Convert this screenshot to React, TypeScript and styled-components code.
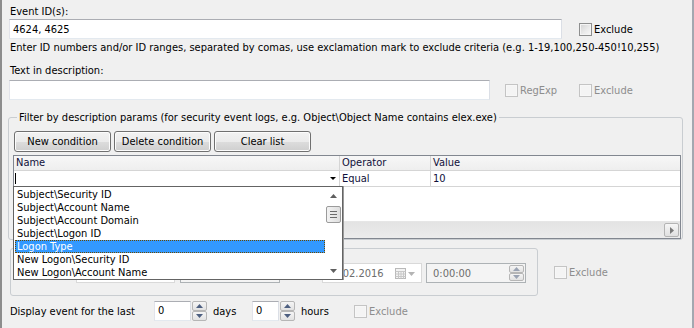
import React from "react";
import styled, {createGlobalStyle} from "styled-components";

const GlobalStyle = createGlobalStyle`
  html, body {
    margin: 0;
    padding: 0;
    background: #f0f0f0;
  }
  body {
    font-family: "DejaVu Sans Condensed", "DejaVu Sans", "Liberation Sans", sans-serif;
    font-stretch: condensed;
    font-size: 11px;
    line-height: 13px;
    color: #000;
  }
`

const Window = styled.div`
  position: relative;
  box-sizing: border-box;
  width: 694px;
  height: 328px;
  overflow: hidden;
  padding: 5px 0 0 7px;
  background: #f0f0f0;
  border-left: 2px solid #8d8d8d;
  border-right: 2px solid #a3a8b0;`
const Caption = styled.div<{ $top?: number; $w?: number }>`
  height: 13px;
  padding-left: 1px;
  margin-top: ${p => p.$top || 0}px;
  width: ${p => p.$w ? p.$w + "px" : "auto"};
  white-space: nowrap;`
const Row = styled.div<{ $top?: number }>`
  display: flex;
  align-items: center;
  margin-top: ${p => p.$top || 0}px;`
const TextBox = styled.div<{ $w: number }>`
  box-sizing: border-box;
  width: ${p => p.$w}px;
  height: 20px;
  padding: 3px 0 0 3px;
  background: #fff;
  border: 1px solid;
  border-color: #abadb3 #dbdfe6 #e3e9ef #e2e3ea;
  white-space: nowrap;`
const CheckItem = styled.label<{ $left?: number; $w?: number; $off?: boolean }>`
  display: flex;
  align-items: center;
  gap: 2px;
  margin-left: ${p => p.$left || 0}px;
  width: ${p => p.$w ? p.$w + "px" : "auto"};
  color: ${p => p.$off ? "#8d8d8d" : "#000"};
  white-space: nowrap;`
const Box = styled.span<{ $off?: boolean }>`
  box-sizing: border-box;
  width: 13px;
  height: 13px;
  border: 1px solid ${p => p.$off ? "#c4c4c4" : "#8e8f8f"};
  background: ${p => p.$off
    ? "#f4f4f4"
    : "linear-gradient(135deg, #d2d2d2 0%, #ececec 60%, #f8f8f8 100%)"};
  box-shadow: inset 0 0 0 1px ${p => p.$off ? "#f7f7f7" : "#f4f4f4"};`
const Help = styled.div`
  margin-top: 2px;
  padding-left: 1px;
  white-space: nowrap;`
const Group = styled.fieldset`
  box-sizing: border-box;
  width: 675px;
  min-width: 0;
  margin: 11px 0 0 -1px;
  padding: 7px 1px 0 4px;
  border: 1px solid #c9cdd1;
  border-radius: 3px;`
const Legend = styled.legend`
  margin-left: 4px;
  padding: 0 2px;
  white-space: nowrap;`
const ButtonRow = styled.div`
  display: flex;
  gap: 3px;
  margin-left: 1px;`
const Button = styled.button`
  box-sizing: border-box;
  width: 97px;
  height: 21px;
  padding: 0;
  font: inherit;
  color: #000;
  border: 1px solid #707070;
  border-radius: 3px;
  background: linear-gradient(#f2f2f2 0%, #ebebeb 50%, #dddddd 51%, #cfcfcf 100%);
  box-shadow: inset 0 0 0 1px #fcfcfc;`
const Grid = styled.div`
  box-sizing: border-box;
  display: flex;
  flex-direction: column;
  width: 668px;
  height: 84px;
  margin-top: 3px;
  border: 1px solid #828790;
  background: #fff;`
const GridRow = styled.div<{ $head?: boolean }>`
  display: grid;
  grid-template-columns: 326px 91px 1fr;
  height: ${p => p.$head ? 14 : 15}px;
  line-height: ${p => p.$head ? 14 : 15}px;
  border-bottom: 1px solid #d5d5d5;
  background: ${p => p.$head ? "linear-gradient(#f7f7f7, #eeeeee)" : "#fff"};
  color: #10103a;`
const Cell = styled.div`
  position: relative;
  padding-left: 2px;
  border-right: 1px solid #d5d5d5;
  white-space: nowrap;
  &:last-child { border-right: 0; }`
const Caret = styled.span`
  position: absolute;
  left: 1px;
  top: 2px;
  width: 1px;
  height: 11px;
  background: #000;`
const ComboArrow = styled.span`
  position: absolute;
  right: 3px;
  top: 6px;
  width: 0;
  height: 0;
  border-left: 3px solid transparent;
  border-right: 3px solid transparent;
  border-top: 3px solid #000;`
const Blank = styled.div`
  flex: 1;`
const HScroll = styled.div`
  display: flex;
  justify-content: flex-end;
  align-items: center;
  height: 17px;
  padding-right: 1px;
  background: linear-gradient(#e3e3e3, #ececec);
  border-top: 1px solid #e6e6e6;
  box-sizing: border-box;`
const ScrollBtn = styled.div`
  display: flex;
  align-items: center;
  justify-content: center;
  box-sizing: border-box;
  width: 15px;
  height: 14px;
  border: 1px solid #b4b4b4;
  border-radius: 2px;
  background: linear-gradient(#f6f6f6, #e0e0e0);`
const DropList = styled.div`
  position: absolute;
  z-index: 10;
  left: -1px;
  top: 15px;
  box-sizing: border-box;
  display: flex;
  width: 330px;
  height: 94px;
  padding-top: 1px;
  background: #fff;
  border: 1px solid #646464;
  box-shadow: 1px 0 0 #9a9a9a;
  color: #000;
  line-height: 13px;`
const Items = styled.div`
  flex: 1;
  padding-left: 1px;`
const Item = styled.div<{ $sel?: boolean }>`
  height: 13px;
  padding-left: 2px;
  background: ${p => p.$sel ? "#3399ff" : "transparent"};
  color: ${p => p.$sel ? "#fff" : "#000"};
  outline: ${p => p.$sel ? "1px dotted #6b4a00" : "none"};
  outline-offset: -1px;
  white-space: nowrap;`
const VScroll = styled.div`
  display: flex;
  flex-direction: column;
  width: 17px;
  margin-top: -1px;`
const Arrow = styled.div`
  display: flex;
  align-items: center;
  justify-content: center;
  height: 17px;`
const Thumb = styled.div`
  display: flex;
  flex-direction: column;
  align-items: center;
  justify-content: center;
  gap: 2px;
  box-sizing: border-box;
  height: 17px;
  margin: 2px 1px 0 1px;
  border: 1px solid #9b9b9b;
  border-radius: 2px;
  background: linear-gradient(90deg, #f3f3f3, #dedede);
  span {
    width: 7px;
    height: 1px;
    background: #6b6b6b;
  }`
const Spacer = styled.div`
  flex: 1;`
const RangeRow = styled.div`
  display: flex;
  align-items: center;
  margin-top: 8px;`
const RangeBox = styled.div`
  box-sizing: border-box;
  display: flex;
  width: 528px;
  margin-left: 1px;
  padding: 14px 0 12px 65px;
  border: 1px solid #c9cdd1;
  border-radius: 3px;`
const Field = styled.div<{ $left?: number; $w: number; $pad: number; $dark?: boolean }>`
  position: relative;
  box-sizing: border-box;
  width: ${p => p.$w}px;
  height: 20px;
  margin-left: ${p => p.$left || 0}px;
  padding: 3px 0 0 ${p => p.$pad}px;
  color: #6d6d6d;
  background: ${p => p.$dark ? "#f4f4f4" : "#fff"};
  border: 1px solid ${p => p.$dark ? "#adb2b5" : "#d9d9d9"};
  white-space: nowrap;`
const FieldIcon = styled.span`
  position: absolute;
  right: 6px;
  top: 4px;
  display: flex;
  align-items: center;
  gap: 2px;`
const Spin = styled.div<{ $h: number }>`
  display: flex;
  flex-direction: column;
  width: 15px;
  height: ${p => p.$h}px;
  margin-left: 1px;`
const SpinHalf = styled.div`
  flex: 1;
  display: flex;
  align-items: center;
  justify-content: center;
  border: 1px solid #b6b6b6;
  border-radius: 2px;
  background: linear-gradient(#f5f5f5, #e2e2e2);`
const InnerSpin = styled.div`
  position: absolute;
  right: 1px;
  top: 1px;
  display: flex;
  flex-direction: column;
  width: 15px;
  height: 16px;`
const Unit = styled.span<{ $left: number; $w: number }>`
  margin-left: ${p => p.$left}px;
  width: ${p => p.$w}px;
  white-space: nowrap;`
const NumBox = styled(TextBox)`
  padding-top: 2px;`

const Tri = ({dir, color = "#4d5f80"}: { dir: "up" | "down" | "right"; color?: string }) => {
    const pts = dir === "up" ? "0,4 7,4 3.5,0" : dir === "down" ? "0,0 7,0 3.5,4" : "0,0 0,7 4,3.5"
    const w = dir === "right" ? 4 : 7
    const h = dir === "right" ? 7 : 4
    return (
        <svg width={w} height={h} viewBox={`0 0 ${w} ${h}`}>
            <polygon points={pts} fill={color}/>
        </svg>
    )
}

const Calendar = () => (
    <svg width={11} height={11} viewBox="0 0 11 11">
        <rect x="0.5" y="0.5" width="10" height="10" fill="#f3f3f3" stroke="#b9b9b9"/>
        <path d="M0.5 3.5H10.5M0.5 6H10.5M0.5 8.5H10.5M3.5 3.5V10.5M6 3.5V10.5M8.5 3.5V10.5" stroke="#c8c8c8"/>
    </svg>
)

const names = [
    "Subject\\Security ID",
    "Subject\\Account Name",
    "Subject\\Account Domain",
    "Subject\\Logon ID",
    "Logon Type",
    "New Logon\\Security ID",
    "New Logon\\Account Name",
]

const Spinner = ({h}: { h: number }) => (
    <Spin $h={h}>
        <SpinHalf><Tri dir="up"/></SpinHalf>
        <SpinHalf><Tri dir="down"/></SpinHalf>
    </Spin>
)

export default function App() {
    return (
        <Window>
            <GlobalStyle/>
            <Caption>Event ID(s):</Caption>
            <Row $top={1}>
                <TextBox $w={553}>4624, 4625</TextBox>
                <CheckItem $left={17}><Box/>Exclude</CheckItem>
            </Row>
            <Help>Enter ID numbers and/or ID ranges, separated by comas, use exclamation mark to exclude criteria (e.g. 1-19,100,250-450!10,255)</Help>
            <Caption $top={10}>Text in description:</Caption>
            <Row $top={3}>
                <TextBox $w={481}/>
                <CheckItem $left={15} $w={74} $off><Box $off/>RegExp</CheckItem>
                <CheckItem $off><Box $off/>Exclude</CheckItem>
            </Row>

            <Group>
                <Legend>Filter by description params (for security event logs, e.g. Object\Object Name contains elex.exe)</Legend>
                <ButtonRow>
                    <Button>New condition</Button>
                    <Button>Delete condition</Button>
                    <Button>Clear list</Button>
                </ButtonRow>
                <Grid>
                    <GridRow $head>
                        <Cell>Name</Cell>
                        <Cell>Operator</Cell>
                        <Cell>Value</Cell>
                    </GridRow>
                    <GridRow>
                        <Cell>
                            <Caret/>
                            <ComboArrow/>
                            <DropList>
                                <Items>
                                    {names.map(n => <Item key={n} $sel={n === "Logon Type"}>{n}</Item>)}
                                </Items>
                                <VScroll>
                                    <Arrow><Tri dir="up" color="#5f5f5f"/></Arrow>
                                    <Thumb><span/><span/><span/></Thumb>
                                    <Spacer/>
                                    <Arrow><Tri dir="down" color="#5f5f5f"/></Arrow>
                                </VScroll>
                            </DropList>
                        </Cell>
                        <Cell>Equal</Cell>
                        <Cell>10</Cell>
                    </GridRow>
                    <Blank/>
                    <HScroll>
                        <ScrollBtn><Tri dir="right" color="#7a7a7a"/></ScrollBtn>
                    </HScroll>
                </Grid>
            </Group>

            <RangeRow>
                <RangeBox>
                    <Field $w={99} $pad={4}/>
                    <Field $w={100} $left={5} $pad={6} $dark/>
                    <Field $w={100} $left={42} $pad={4}>
                        01.02.2016
                        <FieldIcon><Calendar/><Tri dir="down" color="#b4b4b4"/></FieldIcon>
                    </Field>
                    <Field $w={100} $left={4} $pad={6} $dark>
                        0:00:00
                        <InnerSpin>
                            <SpinHalf><Tri dir="up" color="#9aa3b3"/></SpinHalf>
                            <SpinHalf><Tri dir="down" color="#9aa3b3"/></SpinHalf>
                        </InnerSpin>
                    </Field>
                </RangeBox>
                <CheckItem $left={16} $off><Box $off/>Exclude</CheckItem>
            </RangeRow>

            <Row $top={5}>
                <Caption $w={144}>Display event for the last</Caption>
                <NumBox $w={37}>0</NumBox>
                <Spinner h={20}/>
                <Unit $left={6} $w={39}>days</Unit>
                <NumBox $w={27}>0</NumBox>
                <Spinner h={20}/>
                <Unit $left={6} $w={53}>hours</Unit>
                <CheckItem $off><Box $off/>Exclude</CheckItem>
            </Row>
        </Window>
    )
}
